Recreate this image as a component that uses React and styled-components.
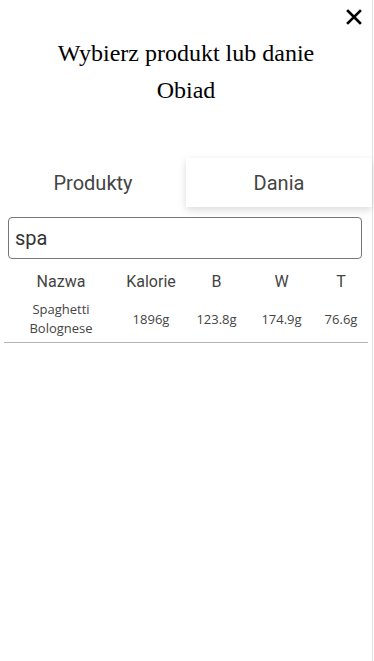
import React, { useState } from "react";
import styled, { createGlobalStyle } from "styled-components";

const GlobalStyle = createGlobalStyle`
  body {
    margin: 0;
    background: #fff;
    font-family: "Roboto", "Liberation Sans", sans-serif;
  }
`;

const rows = [
  { name: "Spaghetti Bolognese", kcal: "1896g", b: "123.8g", w: "174.9g", t: "76.6g" },
];

const App = () => {
  const [tab, setTab] = useState("dania");
  const [query, setQuery] = useState("spa");

  return (
    <>
      <GlobalStyle />
      <Drawer>
        <TopBar>
          <CloseButton aria-label="Zamknij">
            <svg width="16" height="16" viewBox="0 0 16 16">
              <path d="M2 2 L14 14 M14 2 L2 14" stroke="#000" strokeWidth="2.6" strokeLinecap="square" />
            </svg>
          </CloseButton>
        </TopBar>
        <Title>
          Wybierz produkt lub danie
          <br />
          Obiad
        </Title>
        <Tabs>
          <Tab $active={tab === "produkty"} onClick={() => setTab("produkty")}>
            Produkty
          </Tab>
          <Tab $active={tab === "dania"} onClick={() => setTab("dania")}>
            Dania
          </Tab>
        </Tabs>
        <Search value={query} onChange={(e) => setQuery(e.target.value)} />
        <Table>
          <colgroup>
            <col style={{ width: 114 }} />
            <col style={{ width: 66 }} />
            <col style={{ width: 65 }} />
            <col style={{ width: 65 }} />
            <col />
          </colgroup>
          <thead>
            <tr>
              <Th>Nazwa</Th>
              <Th>Kalorie</Th>
              <Th>B</Th>
              <Th>W</Th>
              <Th>T</Th>
            </tr>
          </thead>
          <tbody>
            {rows.map((r) => (
              <tr key={r.name}>
                <Td>{r.name}</Td>
                <Td>{r.kcal}</Td>
                <Td>{r.b}</Td>
                <Td>{r.w}</Td>
                <Td>{r.t}</Td>
              </tr>
            ))}
          </tbody>
        </Table>
      </Drawer>
    </>
  );
};

const Drawer = styled.div`
  width: 373px;
  min-height: 661px;
  box-sizing: border-box;
  border-right: 1px solid #e2e2e2;
  background: #fff;
  display: flex;
  flex-direction: column;
`;

const TopBar = styled.div`
  display: flex;
  justify-content: flex-end;
  padding: 8px 9px 0 0;
  height: 24px;
`;

const CloseButton = styled.button`
  border: none;
  background: none;
  padding: 0;
  width: 18px;
  height: 18px;
  display: flex;
  align-items: center;
  justify-content: center;
  cursor: pointer;
`;

const Title = styled.h2`
  margin: 3px 0 0;
  font-family: "Liberation Serif", "Times New Roman", serif;
  font-weight: normal;
  font-size: 24px;
  line-height: 37px;
  color: #000;
  text-align: center;
`;

const Tabs = styled.div`
  display: grid;
  grid-template-columns: 186px 1fr;
  margin-top: 49px;
  height: 49px;
`;

const Tab = styled.button`
  border: none;
  font-family: "Roboto", "Liberation Sans", sans-serif;
  font-size: 20px;
  color: #444;
  background: ${(p) => (p.$active ? "#fff" : "transparent")};
  box-shadow: ${(p) => (p.$active ? "0 3px 8px rgba(0,0,0,0.14)" : "none")};
  cursor: pointer;
  padding: 0;
`;

const Search = styled.input`
  margin: 10px 10px 0 8px;
  height: 42px;
  box-sizing: border-box;
  border: 1px solid #777;
  border-radius: 4px;
  padding: 0 6px;
  font-family: "Roboto", "Liberation Sans", sans-serif;
  font-size: 20px;
  color: #333;
  outline: none;
`;

const Table = styled.table`
  margin: 9px 0 0 4px;
  width: 364px;
  border-collapse: collapse;
  table-layout: fixed;
`;

const Th = styled.th`
  font-family: "Roboto", "Liberation Sans", sans-serif;
  font-weight: normal;
  font-size: 16px;
  color: #444;
  padding: 4px 0 4px;
  text-align: center;
`;

const Td = styled.td`
  font-family: "Open Sans", "Noto Sans", sans-serif;
  font-size: 13px;
  line-height: 19px;
  color: #444;
  text-align: center;
  padding: 5px 0 4px;
  border-bottom: 1px solid #b5b5b5;
`;

export default App;
